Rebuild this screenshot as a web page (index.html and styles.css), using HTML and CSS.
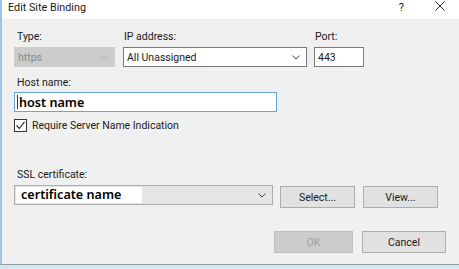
FILE: index.html
```html
<!DOCTYPE html>
<html lang="en">
<head>
    <meta charset="UTF-8">
    <title>Edit Site Binding</title>
    <link rel="stylesheet" href="styles.css">
</head>
<body>
    <div class="dialog">
        <div class="titlebar">
            <span class="title">Edit Site Binding</span>
            <span class="help">?</span>
            <svg class="close" width="10" height="10" viewBox="0 0 10 10">
                <path d="M0.5 0.5 L9.5 9.5 M9.5 0.5 L0.5 9.5" stroke="#222" stroke-width="1" fill="none"/>
            </svg>
        </div>

        <div class="content">
            <div class="row top">
                <div class="field type">
                    <label>Type:</label>
                    <div class="combo disabled">
                        <span class="value">https</span>
                        <svg class="chev" width="8" height="5" viewBox="0 0 8 5"><path d="M0.5 0.5 L4 4 L7.5 0.5" stroke="#b0b0b0" fill="none"/></svg>
                    </div>
                </div>
                <div class="field ip">
                    <label>IP address:</label>
                    <div class="combo">
                        <span class="value">All Unassigned</span>
                        <svg class="chev" width="8" height="5" viewBox="0 0 8 5"><path d="M0.5 0.5 L4 4 L7.5 0.5" stroke="#444" fill="none"/></svg>
                    </div>
                </div>
                <div class="field port">
                    <label>Port:</label>
                    <div class="textbox">443</div>
                </div>
            </div>

            <label class="host-label">Host name:</label>
            <div class="textbox host"><span class="caret"></span>host name</div>

            <div class="check-row">
                <span class="checkbox">
                    <svg width="11" height="11" viewBox="0 0 11 11">
                        <path d="M1.5 5.5 L4.3 8.5 L9.5 1.8" stroke="#222" stroke-width="1.1" fill="none"/>
                    </svg>
                </span>
                <span>Require Server Name Indication</span>
            </div>

            <label class="ssl-label">SSL certificate:</label>
            <div class="row ssl">
                <div class="combo cert">
                    <span class="cert-name">certificate name</span>
                    <svg class="chev" width="8" height="5" viewBox="0 0 8 5"><path d="M0.5 0.5 L4 4 L7.5 0.5" stroke="#444" fill="none"/></svg>
                </div>
                <button class="btn select">Select...</button>
                <button class="btn view">View...</button>
            </div>

            <div class="row actions">
                <button class="btn ok" disabled>OK</button>
                <button class="btn cancel">Cancel</button>
            </div>
        </div>
    </div>
</body>
</html>
```

FILE: styles.css
```css
body {
    margin: 0;
    width: 459px;
    height: 269px;
    overflow: hidden;
    background: #cfe8f6;
    font-family: Roboto, "Noto Sans", sans-serif;
    font-size: 10.5px;
    color: #1a1a1a;
}

.dialog {
    height: 265px;
    background: #f0f0f0;
    border-left: 2px solid #9fc3e6;
    border-bottom: 1px solid #9a9a9a;
    box-sizing: border-box;
}

.titlebar {
    height: 19px;
    background: #fff;
    display: flex;
    align-items: center;
    padding-left: 6px;
}

.title {
    font-size: 10.8px;
    flex: 1;
    margin-top: -4px;
}

.help {
    font-size: 11px;
    margin-right: 31px;
    margin-top: -4px;
}

.close {
    margin-right: 14px;
    margin-top: -8px;
}

.content {
    padding: 10px 0 0 12px;
}

.row {
    display: flex;
}

label {
    display: block;
    line-height: 16px;
    padding-left: 3px;
}

.field label {
    margin-bottom: 2px;
}

.type { width: 101px; margin-right: 8px; }
.ip { width: 184px; margin-right: 7px; }
.ip label { padding-left: 1px; }
.port { width: 50px; }
.port label { padding-left: 1px; }

.combo, .textbox {
    height: 20px;
    box-sizing: border-box;
    border: 1px solid #7a7a7a;
    background: #fff;
    display: flex;
    align-items: center;
    padding-left: 3px;
}

.value {
    flex: 1;
}

.chev {
    margin-right: 6px;
}

.combo.disabled {
    background: #cccccc;
    border-color: #cccccc;
    color: #8a8a8a;
}

.host-label {
    margin-top: 8px;
}

.textbox.host {
    width: 263px;
    margin-top: 1px;
    border-color: #6aa4dd;
    font-family: "Noto Sans", sans-serif;
    font-size: 12.6px;
    font-weight: 600;
    color: #000;
    padding-left: 2px;
}

.caret {
    width: 1px;
    height: 14px;
    background: #333;
    margin-right: 1px;
}

.check-row {
    display: flex;
    align-items: center;
    margin-top: 7px;
}

.checkbox {
    width: 13px;
    height: 13px;
    box-sizing: border-box;
    border: 1px solid #333;
    background: #fff;
    display: flex;
    align-items: center;
    justify-content: center;
    margin-right: 5px;
}

.ssl-label {
    margin-top: 35px;
}

.ssl {
    margin-top: 2px;
    align-items: flex-start;
}

.combo.cert {
    width: 259px;
    background: #e5e5e5;
    border-color: #acacac;
    padding-left: 1px;
}

.cert-name {
    width: 126px;
    height: 16px;
    background: #fff;
    font-family: "Noto Sans", sans-serif;
    font-size: 12.6px;
    font-weight: 600;
    color: #000;
    line-height: 16px;
    padding-left: 5px;
    box-sizing: border-box;
    margin-right: auto;
}

.btn {
    height: 22px;
    box-sizing: border-box;
    border: 1px solid #adadad;
    background: #e1e1e1;
    font-family: Roboto, "Noto Sans", sans-serif;
    font-size: 10.5px;
    color: #1a1a1a;
    padding: 0;
}

.select {
    width: 75px;
    margin: 1px 0 0 7px;
}

.view {
    width: 75px;
    margin: 1px 0 0 8px;
}

.actions {
    margin-top: 23px;
    padding-left: 260px;
}

.ok {
    width: 79px;
    background: #cccccc;
    border-color: #bfbfbf;
    color: #a0a0a0;
}

.cancel {
    width: 84px;
    margin-left: 9px;
}
```
